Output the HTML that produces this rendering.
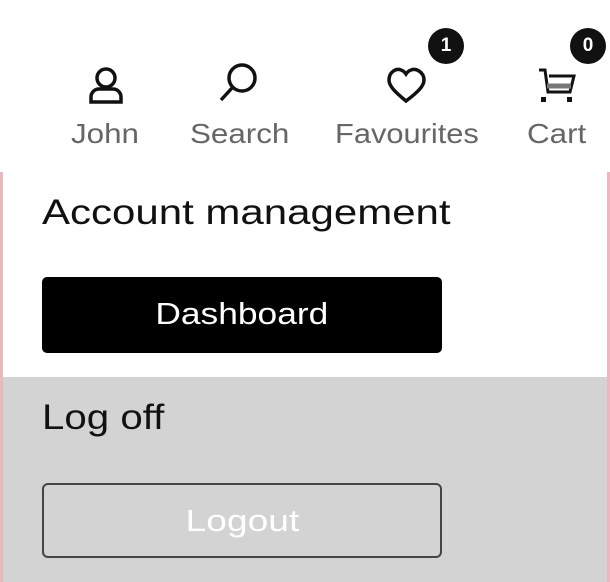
<!DOCTYPE html>
<html><head><meta charset="utf-8"><style>
*{margin:0;padding:0;box-sizing:border-box}
body{width:610px;height:582px;overflow:hidden;background:#fff;font-family:"Liberation Sans",sans-serif;position:relative}
.lbl{position:absolute;top:118px;font-size:28px;color:#666;white-space:nowrap;transform:scaleX(1.12);transform-origin:left top}
.badge{position:absolute;width:36px;height:36px;border-radius:50%;background:#111;color:#fff;font-weight:bold;font-size:19px;text-align:center;line-height:36px}
.pink{position:absolute;top:172px;bottom:0;background:#e9b7bd}
.w{display:inline-block;transform-origin:center}
</style></head><body>
<div class="pink" style="left:0;width:3px"></div>
<div class="pink" style="right:0;width:3px"></div>
<svg style="position:absolute;left:0;top:0" width="610" height="120" fill="none" stroke="#111" stroke-width="3.5">
<circle cx="106" cy="78" r="9"/>
<path d="M91 102 v-5 a8 8 0 0 1 8-8 h14 a8 8 0 0 1 8 8 v5 z"/>
<circle cx="242" cy="78" r="13"/>
<path d="M232 88 L221 100"/>
<path d="M406 101 C395 92 389 86 389 80 C389 72 396 68 401 70 C404 71 406 74 406 74 C406 74 408 71 411 70 C416 68 424 72 424 80 C424 86 418 92 406 101 Z"/>
<path d="M539 70 h6 l3 22 h22 l4-16 h-25" stroke-width="3"/>
<path d="M547 86 h24" stroke-width="5" stroke="#777"/>
<rect x="541" y="97" width="5" height="5" fill="#111" stroke="none"/>
<rect x="567" y="97" width="5" height="5" fill="#111" stroke="none"/>
</svg>
<div class="badge" style="left:428px;top:28px">1</div>
<div class="badge" style="left:570px;top:28px">0</div>
<div class="lbl" style="left:71px">John</div>
<div class="lbl" style="left:190px">Search</div>
<div class="lbl" style="left:335px;transform:scaleX(1.1)">Favourites</div>
<div class="lbl" style="left:527px">Cart</div>
<div style="position:absolute;left:42px;top:193px;font-size:35px;color:#111;white-space:nowrap;transform:scaleX(1.2);transform-origin:left top">Account management</div>
<div style="position:absolute;left:42px;top:277px;width:400px;height:76px;background:#000;border-radius:5px;color:#fff;font-size:31px;text-align:center;line-height:74px"><span class="w" style="transform:scaleX(1.14)">Dashboard</span></div>
<div style="position:absolute;left:3px;right:3px;top:377px;bottom:0;background:#d3d3d3"></div>
<div style="position:absolute;left:42px;top:398px;font-size:35px;color:#111;transform:scaleX(1.15);transform-origin:left top">Log off</div>
<div style="position:absolute;left:42px;top:483px;width:400px;height:75px;border:2px solid #444;border-radius:6px;color:#fff;font-size:31px;text-align:center;line-height:71px"><span class="w" style="transform:scaleX(1.2)">Logout</span></div>
</body></html>
